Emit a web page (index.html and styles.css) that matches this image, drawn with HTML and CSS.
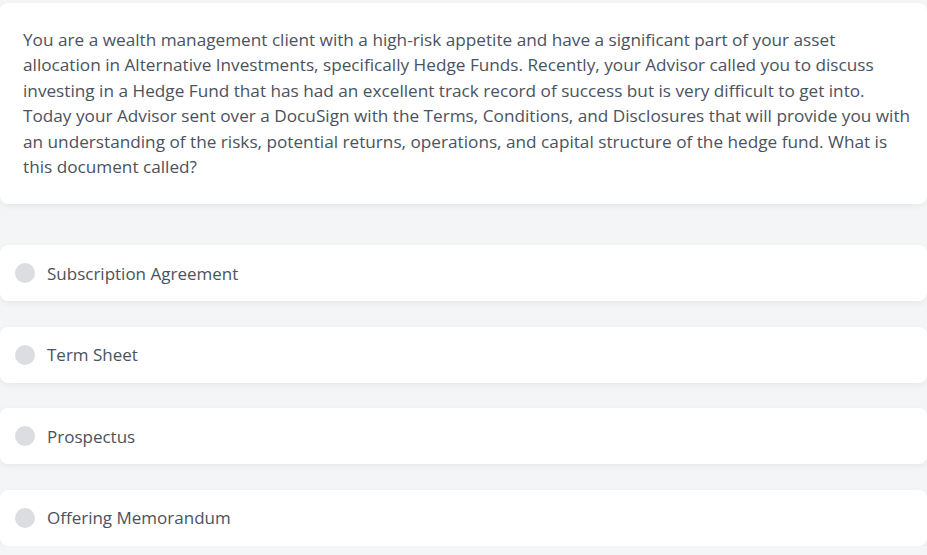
FILE: index.html
```html
<!DOCTYPE html>
<html>
<head>
<meta charset="utf-8">
<link rel="stylesheet" href="styles.css">
</head>
<body>
<div class="page">
  <div class="question card">
    <p class="q-text">You are a wealth management client with a high-risk appetite and have a significant part of your asset allocation in Alternative Investments, specifically Hedge Funds. Recently, your Advisor called you to discuss investing in a Hedge Fund that has had an excellent track record of success but is very difficult to get into. Today your Advisor sent over a DocuSign with the Terms, Conditions, and Disclosures that will provide you with an understanding of the risks, potential returns, operations, and capital structure of the hedge fund. What is this document called?</p>
  </div>
  <div class="options">
    <label class="option card"><span class="radio"></span><span class="label">Subscription Agreement</span></label>
    <label class="option card"><span class="radio"></span><span class="label">Term Sheet</span></label>
    <label class="option card"><span class="radio"></span><span class="label">Prospectus</span></label>
    <label class="option card"><span class="radio"></span><span class="label">Offering Memorandum</span></label>
  </div>
</div>
</body>
</html>
```
FILE: styles.css
```css
html, body {
  margin: 0;
  padding: 0;
  background: #f4f5f7;
}
body {
  font-family: "Open Sans", "Noto Sans", sans-serif;
  color: #4b5260;
}
.page {
  padding-top: 3px;
  width: 927px;
}
.card {
  background: #ffffff;
  border-radius: 8px;
  box-shadow: 0 2px 6px rgba(0, 0, 0, 0.06);
}
.question {
  padding: 24px 14px 25px 23px;
}
.q-text {
  margin: 0;
  font-size: 17.2px;
  line-height: 25.4px;
}
.options {
  margin-top: 41px;
  display: flex;
  flex-direction: column;
  gap: 25.5px;
}
.option {
  display: flex;
  align-items: center;
  height: 56px;
  padding-left: 15px;
  box-sizing: border-box;
}
.radio {
  width: 20px;
  height: 20px;
  border-radius: 50%;
  background: #dcdde0;
  flex: none;
}
.label {
  margin-left: 12px;
  font-size: 17px;
}
```
